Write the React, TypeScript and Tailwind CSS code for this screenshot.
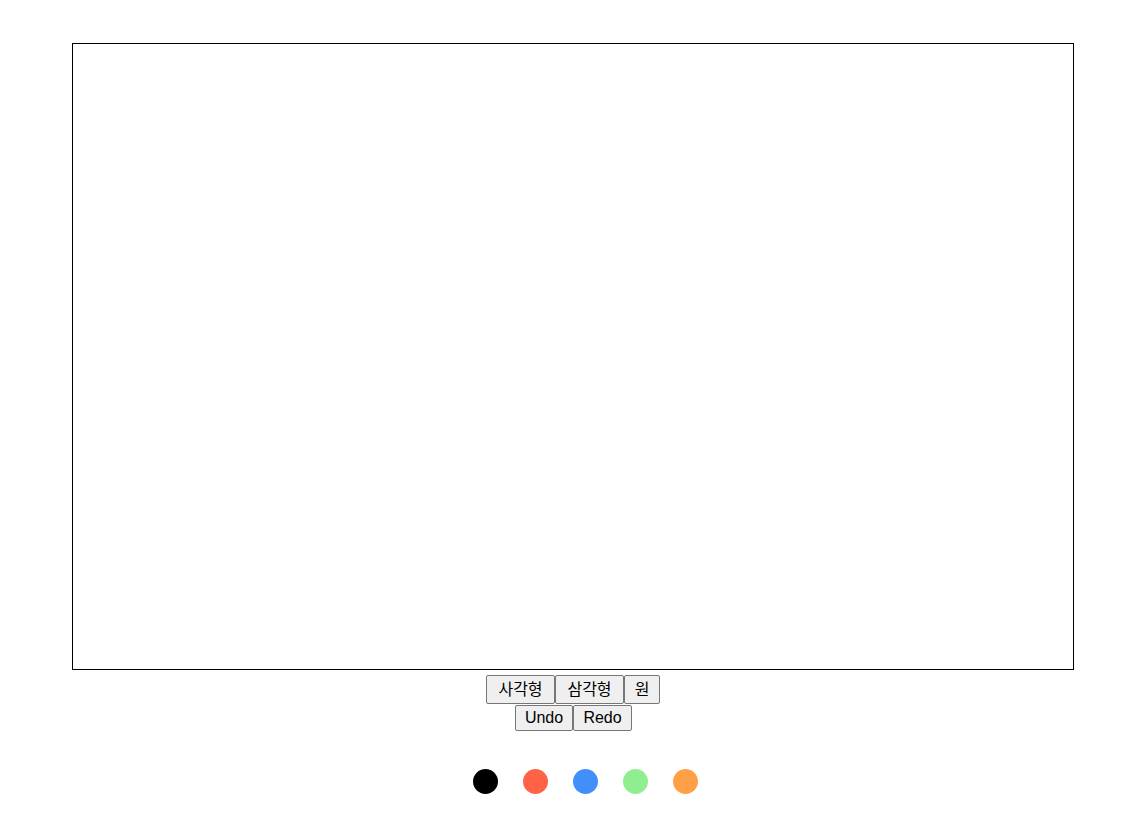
import React from 'react';

const colors = ['#000000', '#ff6347', '#428ffc', '#90ee90', '#ffa047'];

function Btn({ children, className }: { children: React.ReactNode; className: string }) {
  return (
    <button
      className={`flex items-center justify-center bg-[#efefef] border border-[#767676] rounded-[2px] text-base leading-none text-black hover:bg-[#e5e5e5] ${className}`}
    >
      {children}
    </button>
  );
}

export default function App() {
  return (
    <div
      className="w-[1144px] h-[838px] bg-white flex flex-col items-center"
      style={{ fontFamily: '"Liberation Sans", Arial, "Noto Sans CJK KR", sans-serif' }}
    >
      <div className="mt-[43px] ml-[2px] w-[1002px] h-[627px] border border-black" />
      <div className="flex mt-[5px] ml-[2px]">
        <Btn className="w-[69px] h-[29px]">사각형</Btn>
        <Btn className="w-[69px] h-[29px]">삼각형</Btn>
        <Btn className="w-[36px] h-[29px]">원</Btn>
      </div>
      <div className="flex mt-px ml-[3px]">
        <Btn className="w-[58px] h-[26px]">Undo</Btn>
        <Btn className="w-[59px] h-[26px]">Redo</Btn>
      </div>
      <div className="flex mt-[38px] ml-[2px]">
        {colors.map((c) => (
          <div key={c} className="ml-[25px] w-[25px] h-[25px] rounded-full" style={{ backgroundColor: c }} />
        ))}
      </div>
    </div>
  );
}
